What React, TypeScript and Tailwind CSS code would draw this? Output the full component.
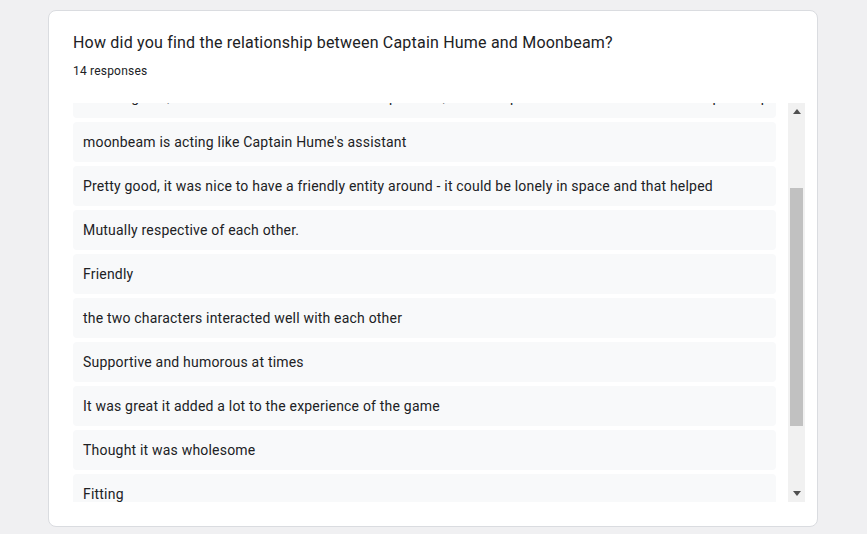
import React from "react";

const responses = [
  "I liked them a lot",
  "Interesting, it kept things light",
  "Amazing duo, Moonbeam and Hume worked as partners, which helped the mood a lot in the time spent at play",
  "moonbeam is acting like Captain Hume's assistant",
  "Pretty good, it was nice to have a friendly entity around - it could be lonely in space and that helped",
  "Mutually respective of each other.",
  "Friendly",
  "the two characters interacted well with each other",
  "Supportive and humorous at times",
  "It was great it added a lot to the experience of the game",
  "Thought it was wholesome",
  "Fitting",
  "Good",
  "Nice",
];

function Arrow({ up }: { up?: boolean }) {
  return (
    <div className="h-[17px] flex items-center justify-center">
      <svg width="8" height="5" viewBox="0 0 8 5">
        {up ? (
          <polygon points="0,5 8,5 4,0" fill="#505050" />
        ) : (
          <polygon points="0,0 8,0 4,5" fill="#505050" />
        )}
      </svg>
    </div>
  );
}

export default function App() {
  return (
    <div
      className="min-h-[534px] w-full bg-[#f0f0f2] pt-[10px]"
      style={{ fontFamily: "Roboto, 'Liberation Sans', sans-serif" }}
    >
      <div className="w-[770px] ml-[48px] bg-white border border-[#dadce0] rounded-lg pl-6 pr-3 pt-5 pb-6">
        <div className="text-[16px] leading-6 text-[#202124] tracking-[0.2px]">
          How did you find the relationship between Captain Hume and Moonbeam?
        </div>
        <div className="mt-2 text-[12px] leading-4 text-[#202124] tracking-[0.2px]">14 responses</div>
        <div className="mt-6 flex h-[399px] gap-3">
          <div className="flex-1 overflow-hidden">
            <div className="-mt-[113px] flex flex-col gap-1">
              {responses.map((r, i) => (
                <div
                  key={i}
                  className={
                    i === 2
                      ? "h-10 shrink-0 bg-[#f8f9fa] rounded px-[10px] pb-[2px] flex items-center text-[14px] text-[#202124] tracking-[0.2px] whitespace-nowrap overflow-hidden"
                      : "h-10 shrink-0 bg-[#f8f9fa] rounded px-[10px] flex items-center text-[14px] text-[#202124] tracking-[0.2px] whitespace-nowrap overflow-hidden"
                  }
                >
                  {r}
                </div>
              ))}
            </div>
          </div>
          <div className="w-[17px] bg-[#f1f1f1] flex flex-col">
            <Arrow up />
            <div className="h-[68px]" />
            <div className="h-[238px] mx-[2px] bg-[#c1c1c1]" />
            <div className="flex-1" />
            <Arrow />
          </div>
        </div>
      </div>
    </div>
  );
}
